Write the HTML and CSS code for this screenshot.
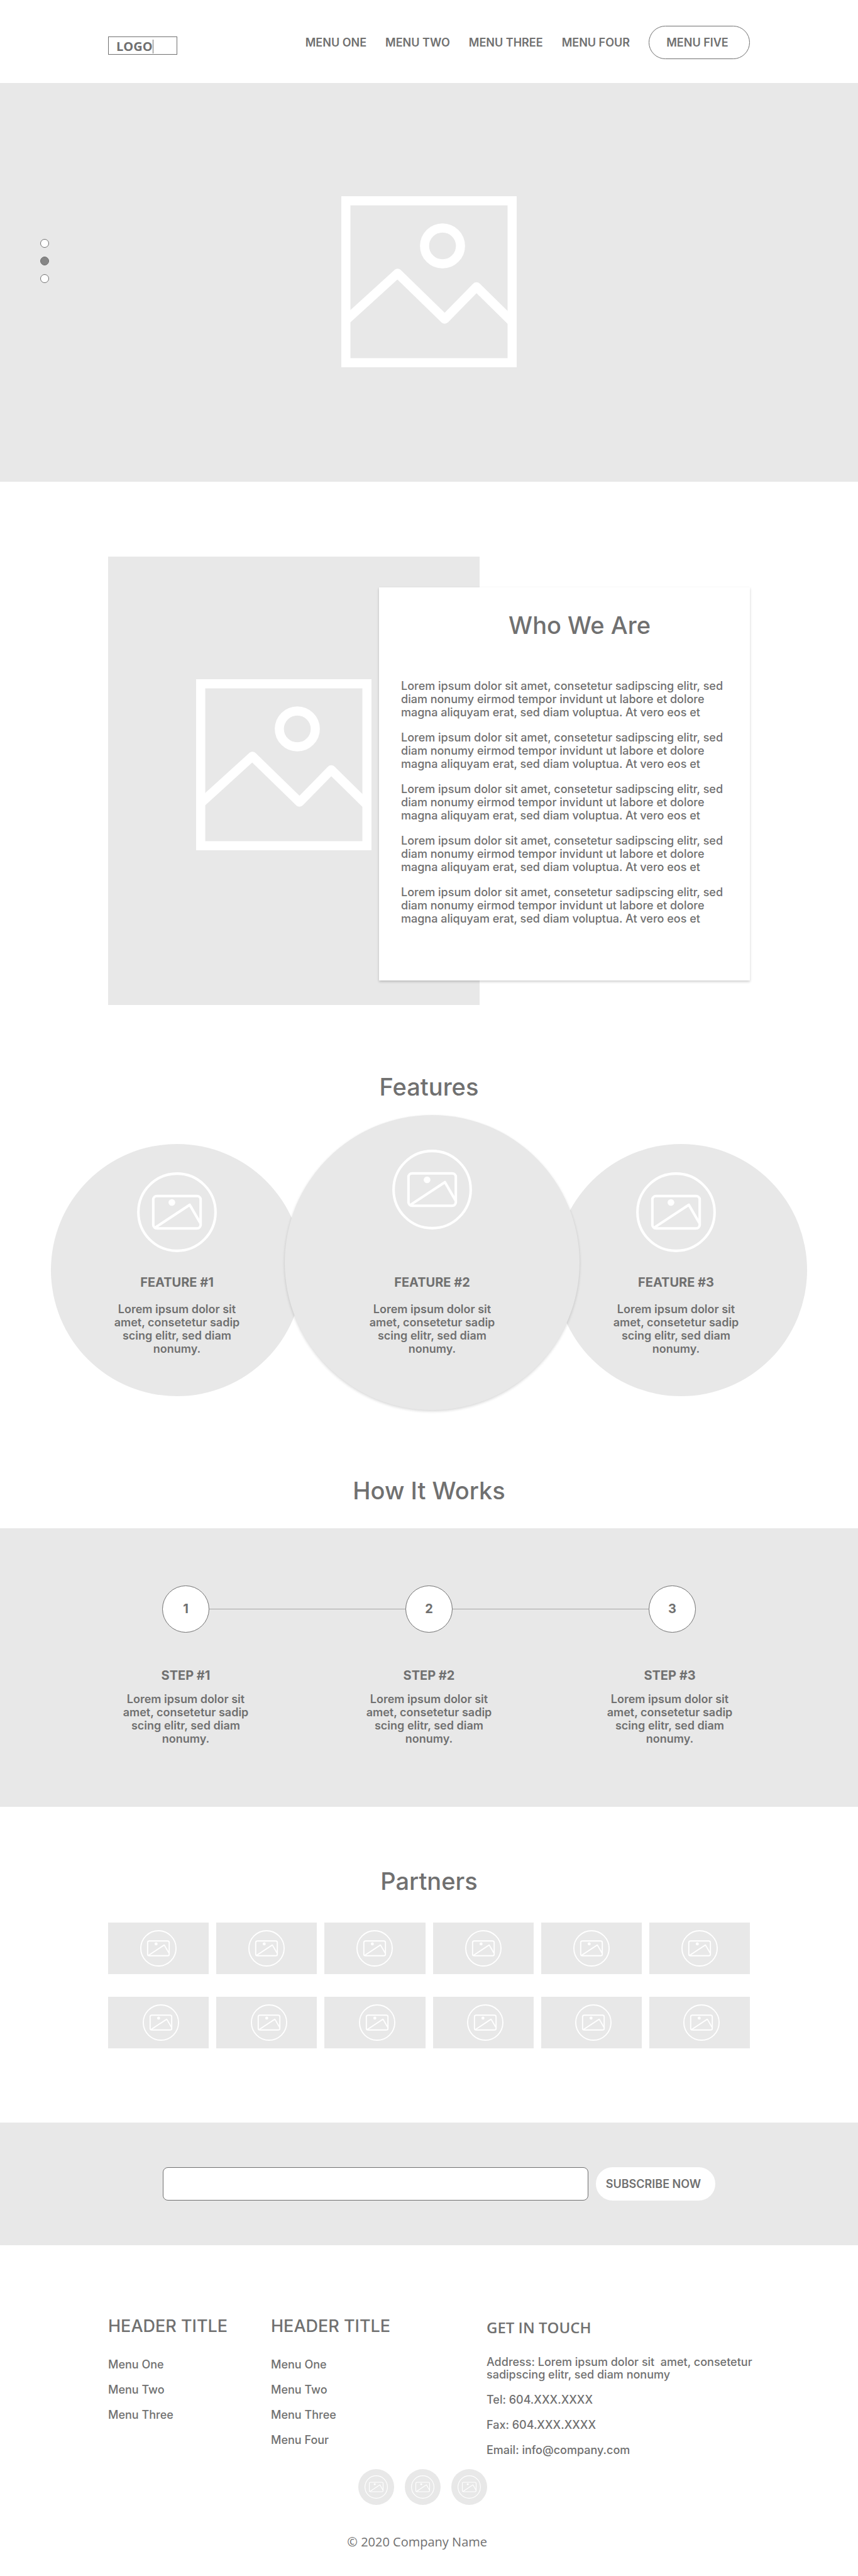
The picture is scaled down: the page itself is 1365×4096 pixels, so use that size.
FILE: index.html
```html
<!DOCTYPE html>
<html lang="en">
<head>
<meta charset="utf-8">
<meta name="viewport" content="width=device-width, initial-scale=1">
<title>Company Name</title>
<link rel="stylesheet" href="styles.css">
</head>
<body>
<svg class="sprite" aria-hidden="true">
  <symbol id="picture" viewBox="0 0 279 272">
    <g fill="none" stroke="currentColor" stroke-width="14.5" stroke-linejoin="round">
      <rect x="7.25" y="7.25" width="264.5" height="257.5" stroke-linejoin="miter"/>
      <circle cx="161" cy="79" r="28.6"/>
      <path d="M7 197.500L89.500 122.500L164.500 195.500L215 144L272 200"/>
    </g>
  </symbol>
  <symbol id="badge" viewBox="0 0 178 178">
    <g fill="none" stroke="currentColor" stroke-width="5.700" stroke-linejoin="round">
      <circle cx="89" cy="89" r="86"/>
      <rect x="36.200" y="52.800" width="105.600" height="72.400" rx="8"/>
      <path d="M40 123.500L117.500 72.500L141 113"/>
    </g>
    <circle cx="77.700" cy="67.300" r="7.500" fill="currentColor"/>
  </symbol>
</svg>

<header class="header container">
  <a class="logo" href="#"><span class="logo-text">LOGO</span></a>
  <nav class="nav" aria-label="Main">
    <a href="#">MENU ONE</a>
    <a href="#">MENU TWO</a>
    <a href="#">MENU THREE</a>
    <a href="#">MENU FOUR</a>
    <a class="nav-button" href="#">MENU FIVE</a>
  </nav>
</header>

<main>
  <section class="hero" aria-label="Gallery">
    <div class="dots">
      <button class="dot" type="button" aria-label="Slide 1"></button>
      <button class="dot dot-active" type="button" aria-label="Slide 2"></button>
      <button class="dot" type="button" aria-label="Slide 3"></button>
    </div>
    <svg class="picture"><use href="#picture"/></svg>
  </section>

  <section class="about container">
    <div class="about-image"><svg class="picture"><use href="#picture"/></svg></div>
    <div class="about-card">
      <h2 class="title">Who We Are</h2>
      <p>Lorem ipsum dolor sit amet, consetetur sadipscing elitr, sed<br>diam nonumy eirmod tempor invidunt ut labore et dolore<br>magna aliquyam erat, sed diam voluptua. At vero eos et</p>
      <p>Lorem ipsum dolor sit amet, consetetur sadipscing elitr, sed<br>diam nonumy eirmod tempor invidunt ut labore et dolore<br>magna aliquyam erat, sed diam voluptua. At vero eos et</p>
      <p>Lorem ipsum dolor sit amet, consetetur sadipscing elitr, sed<br>diam nonumy eirmod tempor invidunt ut labore et dolore<br>magna aliquyam erat, sed diam voluptua. At vero eos et</p>
      <p>Lorem ipsum dolor sit amet, consetetur sadipscing elitr, sed<br>diam nonumy eirmod tempor invidunt ut labore et dolore<br>magna aliquyam erat, sed diam voluptua. At vero eos et</p>
      <p>Lorem ipsum dolor sit amet, consetetur sadipscing elitr, sed<br>diam nonumy eirmod tempor invidunt ut labore et dolore<br>magna aliquyam erat, sed diam voluptua. At vero eos et</p>
    </div>
  </section>

  <section class="features">
    <h2 class="title">Features</h2>
    <div class="feature-row">
      <article class="feature">
        <svg class="feature-icon"><use href="#badge"/></svg>
        <h3 class="subtitle">FEATURE #1</h3>
        <p class="blurb">Lorem ipsum dolor sit<br>amet, consetetur sadip<br>scing elitr, sed diam<br>nonumy.</p>
      </article>
      <article class="feature feature-main">
        <svg class="feature-icon"><use href="#badge"/></svg>
        <h3 class="subtitle">FEATURE #2</h3>
        <p class="blurb">Lorem ipsum dolor sit<br>amet, consetetur sadip<br>scing elitr, sed diam<br>nonumy.</p>
      </article>
      <article class="feature feature-last">
        <svg class="feature-icon"><use href="#badge"/></svg>
        <h3 class="subtitle">FEATURE #3</h3>
        <p class="blurb">Lorem ipsum dolor sit<br>amet, consetetur sadip<br>scing elitr, sed diam<br>nonumy.</p>
      </article>
    </div>
  </section>

  <section class="how">
    <h2 class="title">How It Works</h2>
    <div class="band how-band">
      <ol class="steps">
        <li class="step">
          <span class="step-number">1</span>
          <h3 class="subtitle">STEP #1</h3>
          <p class="blurb">Lorem ipsum dolor sit<br>amet, consetetur sadip<br>scing elitr, sed diam<br>nonumy.</p>
        </li>
        <li class="step">
          <span class="step-number">2</span>
          <h3 class="subtitle">STEP #2</h3>
          <p class="blurb">Lorem ipsum dolor sit<br>amet, consetetur sadip<br>scing elitr, sed diam<br>nonumy.</p>
        </li>
        <li class="step">
          <span class="step-number">3</span>
          <h3 class="subtitle">STEP #3</h3>
          <p class="blurb">Lorem ipsum dolor sit<br>amet, consetetur sadip<br>scing elitr, sed diam<br>nonumy.</p>
        </li>
      </ol>
    </div>
  </section>

  <section class="partners container">
    <h2 class="title">Partners</h2>
    <div class="partner-grid">
      <div class="partner"><svg><use href="#badge"/></svg></div>
      <div class="partner"><svg><use href="#badge"/></svg></div>
      <div class="partner"><svg><use href="#badge"/></svg></div>
      <div class="partner"><svg><use href="#badge"/></svg></div>
      <div class="partner"><svg><use href="#badge"/></svg></div>
      <div class="partner"><svg><use href="#badge"/></svg></div>
      <div class="partner partner-alt"><svg><use href="#badge"/></svg></div>
      <div class="partner partner-alt"><svg><use href="#badge"/></svg></div>
      <div class="partner partner-alt"><svg><use href="#badge"/></svg></div>
      <div class="partner partner-alt"><svg><use href="#badge"/></svg></div>
      <div class="partner partner-alt"><svg><use href="#badge"/></svg></div>
      <div class="partner partner-alt"><svg><use href="#badge"/></svg></div>
    </div>
  </section>

  <form class="band subscribe">
    <input class="subscribe-input" type="email" aria-label="Email address">
    <button class="subscribe-button" type="button">SUBSCRIBE NOW</button>
  </form>
</main>

<footer class="footer container">
  <div class="footer-columns">
    <div>
      <h2 class="footer-title">HEADER TITLE</h2>
      <ul class="footer-list">
        <li><a href="#">Menu One</a></li>
        <li><a href="#">Menu Two</a></li>
        <li><a href="#">Menu Three</a></li>
      </ul>
    </div>
    <div>
      <h2 class="footer-title">HEADER TITLE</h2>
      <ul class="footer-list">
        <li><a href="#">Menu One</a></li>
        <li><a href="#">Menu Two</a></li>
        <li><a href="#">Menu Three</a></li>
        <li><a href="#">Menu Four</a></li>
      </ul>
    </div>
    <address class="contact">
      <h2 class="footer-title contact-title">GET IN TOUCH</h2>
      <p>Address: Lorem ipsum dolor sit&nbsp; amet, consetetur<br>sadipscing elitr, sed diam nonumy</p>
      <p>Tel: 604.XXX.XXXX</p>
      <p>Fax: 604.XXX.XXXX</p>
      <p>Email: info@company.com</p>
    </address>
  </div>
  <div class="footer-bottom">
    <div class="social">
      <a href="#" aria-label="Social profile 1"><svg><use href="#badge"/></svg></a>
      <a href="#" aria-label="Social profile 2"><svg><use href="#badge"/></svg></a>
      <a href="#" aria-label="Social profile 3"><svg><use href="#badge"/></svg></a>
    </div>
    <p class="copyright">© 2020 Company Name</p>
  </div>
</footer>
</body>
</html>
```

FILE: styles.css
```css
:root {
  --ink: #707070;
  --fill: #e8e8e8;
  --line: #a6a6a6;
}

* {
  box-sizing: border-box;
}

body {
  margin: 0;
  background: #fff;
  color: var(--ink);
  font-family: Inter, "Liberation Sans", sans-serif;
  font-size: 18px;
  font-weight: 500;
  line-height: 21px;
}

h2,
h3,
p,
ul,
ol {
  margin: 0;
  padding: 0;
}

ul,
ol {
  list-style: none;
}

a {
  color: inherit;
  text-decoration: none;
}

button,
input {
  font: inherit;
  color: inherit;
}

.sprite {
  display: none;
}

.container {
  width: 100%;
  max-width: 1021px;
  margin: 0 auto;
}

.band {
  background: var(--fill);
}

.title {
  font-size: 38px;
  font-weight: 500;
  line-height: 44px;
  text-align: center;
}

.subtitle {
  font-size: 20px;
  font-weight: 700;
  line-height: 24px;
}

.blurb {
  font-size: 18px;
  font-weight: 600;
  line-height: 21px;
}

.picture {
  display: block;
  width: 279px;
  height: 272px;
  color: #fff;
}

/* Header */
.header {
  display: flex;
  align-items: center;
  justify-content: space-between;
  padding: 41px 0 38px;
}

.logo {
  width: 110px;
  margin-top: 10px;
  padding: 4px 0 1px 12px;
  border: 1px solid var(--ink);
  font-family: "Open Sans", "Noto Sans", sans-serif;
  font-size: 20px;
  font-weight: 700;
  line-height: 22px;
}

.logo-text {
  display: inline-block;
  border-right: 1px solid var(--ink);
}

.nav {
  display: flex;
  align-items: center;
  gap: 30px;
  font-size: 18px;
  font-weight: 600;
  line-height: 21px;
}

.nav-button {
  width: 161px;
  padding: 15px 6px 15px 0;
  border: 1px solid var(--ink);
  border-radius: 27px;
  text-align: center;
}

/* Hero */
.hero {
  position: relative;
  display: flex;
  justify-content: center;
  padding: 180px 0 182px;
  background: var(--fill);
}

.dots {
  position: absolute;
  top: 248px;
  left: 64px;
  display: flex;
  flex-direction: column;
  gap: 14px;
}

.dot {
  width: 14px;
  height: 14px;
  padding: 0;
  border: 1px solid var(--ink);
  border-radius: 50%;
  background: #fff;
}

.dot-active {
  background: #868686;
}

/* About */
.about {
  display: flex;
  align-items: flex-start;
  padding-top: 119px;
}

.about-image {
  flex: 0 0 591px;
  height: 713px;
  padding: 195px 0 0 140px;
  background: var(--fill);
}

.about-card {
  flex: 1;
  display: flex;
  flex-direction: column;
  gap: 19px;
  margin: 49px 0 0 -160px;
  padding: 38px 35px 88px;
  background: #fff;
  box-shadow: 0 2px 4px rgba(0, 0, 0, 0.2);
  white-space: nowrap;
}

.about-card .title {
  margin-bottom: 45px;
  padding-left: 48px;
}

/* Features */
.features {
  padding-top: 108px;
}

.feature-row {
  display: flex;
  align-items: flex-start;
  justify-content: center;
  margin-top: 23px;
}

.feature {
  display: flex;
  flex-direction: column;
  align-items: center;
  flex: none;
  width: 401px;
  height: 401px;
  margin-top: 46px;
  padding-top: 45px;
  border-radius: 50%;
  background: var(--fill);
  text-align: center;
}

.feature-main {
  z-index: 1;
  width: 469px;
  height: 469px;
  margin: 0 -39px 0 -29px;
  padding-top: 55px;
  box-shadow: 0 2px 4px rgba(0, 0, 0, 0.16);
}

.feature-last {
  padding-right: 16px;
}

.feature-icon {
  width: 127px;
  height: 127px;
  margin-bottom: 36px;
  color: #fff;
}

.feature-main .feature-icon {
  margin-bottom: 72px;
}

.feature .blurb {
  margin-top: 20px;
}

/* How it works */
.how {
  padding-top: 106px;
}

.how-band {
  margin-top: 38px;
  padding: 91px 0 98px;
}

.steps {
  position: relative;
  display: grid;
  grid-template-columns: repeat(3, 1fr);
  max-width: 1161px;
  margin: 0 auto;
}

.steps::before {
  content: "";
  position: absolute;
  top: 37px;
  left: 17%;
  right: 17%;
  height: 1px;
  background: var(--line);
}

.step {
  display: flex;
  flex-direction: column;
  align-items: center;
  text-align: center;
}

.step-number {
  z-index: 1;
  width: 75px;
  height: 75px;
  border: 1px solid var(--ink);
  border-radius: 50%;
  background: #fff;
  font-size: 20px;
  font-weight: 700;
  line-height: 73px;
}

.step .subtitle {
  margin: 56px 0 15px;
}

.step:last-child .subtitle,
.step:last-child .blurb {
  padding-right: 8px;
}

/* Partners */
.partners {
  padding: 96px 0 118px;
}

.partner-grid {
  display: grid;
  grid-template-columns: repeat(6, 1fr);
  gap: 36px 12px;
  margin-top: 44px;
}

.partner {
  display: flex;
  align-items: center;
  justify-content: center;
  height: 82px;
  background: var(--fill);
  color: #fff;
}

.partner-alt {
  padding-left: 7px;
}

.partner svg {
  width: 58px;
  height: 58px;
}

/* Subscribe */
.subscribe {
  display: flex;
  justify-content: center;
  gap: 12px;
  padding: 71px 0 71px 32px;
}

.subscribe-input {
  width: 677px;
  height: 53px;
  padding: 0 16px;
  border: 1px solid var(--ink);
  border-radius: 8px;
  background: #fff;
}

.subscribe-button {
  width: 190px;
  height: 53px;
  padding: 0 7px 0 0;
  border: 0;
  border-radius: 27px;
  background: #fff;
  font-size: 18px;
  font-weight: 600;
}

/* Footer */
.footer {
  padding: 114px 0 39px;
}

.footer-columns {
  display: grid;
  grid-template-columns: 259px 343px 1fr;
  line-height: 20px;
}

.footer-title {
  font-size: 27px;
  font-weight: 500;
  line-height: 30px;
}

.footer-list {
  display: flex;
  flex-direction: column;
  gap: 20px;
  margin-top: 36px;
}

.contact {
  display: flex;
  flex-direction: column;
  gap: 20px;
  padding-top: 2px;
  font-style: normal;
  white-space: nowrap;
}

.contact-title {
  margin-bottom: 10px;
  font-family: "Open Sans", "Noto Sans", sans-serif;
  font-size: 24px;
  font-weight: 600;
}

.footer-bottom {
  display: flex;
  flex-direction: column;
  align-items: flex-end;
  max-width: 603px;
  margin-top: 20px;
}

.social {
  display: flex;
  gap: 17px;
}

.social a {
  display: flex;
  align-items: center;
  justify-content: center;
  width: 57px;
  height: 57px;
  border-radius: 50%;
  background: var(--fill);
  color: #fff;
}

.social svg {
  width: 37px;
  height: 37px;
}

.copyright {
  margin-top: 45px;
  font-family: "Open Sans", "Noto Sans", sans-serif;
  font-size: 20px;
  font-weight: 400;
  line-height: 28px;
}
```
